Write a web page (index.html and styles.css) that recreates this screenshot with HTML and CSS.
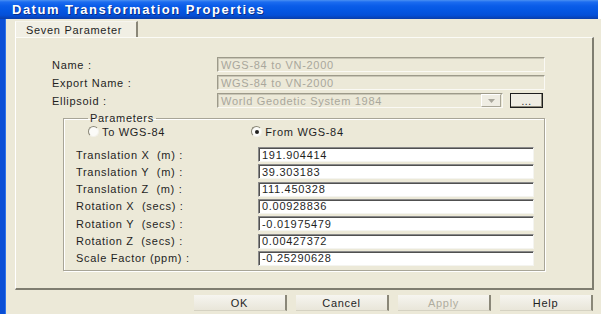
FILE: index.html
```html
<!DOCTYPE html>
<html>
<head>
<meta charset="utf-8">
<link rel="stylesheet" href="styles.css">
</head>
<body>
<div class="window">
  <div class="titlebar"><span class="title">Datum Transformation Properties</span></div>
  <div class="frame">
    <div class="tabs"><div class="tab">Seven Parameter</div></div>
    <div class="panel">
      <div class="props">
        <div class="prow"><span class="plabel">Name :</span><div class="field dis">WGS-84 to VN-2000</div></div>
        <div class="prow"><span class="plabel">Export Name :</span><div class="field dis">WGS-84 to VN-2000</div></div>
        <div class="prow"><span class="plabel">Ellipsoid :</span>
          <div class="combo dis"><span class="combo-text">World Geodetic System 1984</span>
            <span class="arrow"><svg width="7" height="4" viewBox="0 0 7 4"><path d="M0 0h7L3.5 4z" fill="#a9a79c"/></svg></span>
          </div>
          <div class="dots">...</div>
        </div>
      </div>
      <fieldset class="group">
        <legend class="legend">Parameters</legend>
        <div class="radios">
          <div class="ropt"><span class="radio"></span><span>To WGS-84</span></div>
          <div class="ropt from"><span class="radio on"></span><span>From WGS-84</span></div>
        </div>
        <div class="rows">
          <span class="rlabel">Translation X&nbsp; (m) :</span><div class="input">191.904414</div>
          <span class="rlabel">Translation Y&nbsp; (m) :</span><div class="input">39.303183</div>
          <span class="rlabel">Translation Z&nbsp; (m) :</span><div class="input">111.450328</div>
          <span class="rlabel">Rotation X&nbsp; (secs) :</span><div class="input">0.00928836</div>
          <span class="rlabel">Rotation Y&nbsp; (secs) :</span><div class="input">-0.01975479</div>
          <span class="rlabel">Rotation Z&nbsp; (secs) :</span><div class="input">0.00427372</div>
          <span class="rlabel">Scale Factor (ppm) :</span><div class="input">-0.25290628</div>
        </div>
      </fieldset>
    </div>
    <div class="buttons">
      <div class="btn">OK</div>
      <div class="btn">Cancel</div>
      <div class="btn disabled">Apply</div>
      <div class="btn">Help</div>
    </div>
  </div>
</div>
</body>
</html>
```
FILE: styles.css
```css
html, body {
  margin: 0;
  padding: 0;
  background: #fff;
}
body {
  font-family: "Liberation Sans", Arial, sans-serif;
  font-size: 11px;
  letter-spacing: 0.7px;
  color: #1f1f1f;
}
.window {
  width: 601px;
  height: 314px;
  display: flex;
  flex-direction: column;
}
.titlebar {
  height: 22px;
  margin-right: 3px;
  background: linear-gradient(to bottom, #4a90f2 0, #1c6cf0 2px, #0a5ce8 6px, #0558e4 50%, #0450d8 80%, #0a3eaa 100%);
  display: flex;
  align-items: center;
  padding-left: 12px;
}
.title {
  color: #fff;
  font-weight: bold;
  font-size: 13px;
  letter-spacing: 1.5px;
  text-shadow: 1px 1px 0 #0a2f8a;
}
.frame {
  flex: 1;
  background: #ece9d8;
  border-left: 5px solid #0a4fd6;
  box-shadow: inset 1px 0 0 #2f74ea;
  padding: 2px 7px 3px 10px;
  display: flex;
  flex-direction: column;
}
.tabs {
  display: flex;
  height: 16px;
}
.tab {
  width: 110px;
  padding-left: 10px;
  border-top: 1px solid #f6f5ef;
  border-left: 1px solid #fff;
  border-right: 2px solid #8a8778;
  background: #f1efe4;
  display: flex;
  align-items: center;
}
.panel {
  height: 250px;
  border-top: 1px solid #fbfbf6;
  border-left: 1px solid #fff;
  border-right: 2px solid #7f7d70;
  border-bottom: 2px solid #7f7d70;
  display: flex;
  flex-direction: column;
}
.props {
  display: flex;
  flex-direction: column;
  gap: 3px;
  padding: 19px 0 0 36px;
}
.prow {
  display: flex;
  align-items: center;
  height: 15px;
}
.plabel {
  width: 165px;
}
.field {
  width: 323px;
  height: 13px;
  padding-left: 3px;
  display: flex;
  align-items: center;
}
.dis {
  color: #a9a79c;
  border: 1px solid;
  border-color: #9d9a8a #faf9f4 #faf9f4 #9d9a8a;
  box-shadow: inset 1px 1px 0 #c9c6b6;
  background: #ece9d8;
}
.combo {
  width: 284px;
  height: 13px;
  display: flex;
  align-items: center;
  justify-content: space-between;
}
.combo-text {
  padding-left: 3px;
}
.arrow {
  width: 18px;
  height: 11px;
  margin-right: 1px;
  background: #efede3;
  border: 1px solid;
  border-color: #fff #a9a697 #a9a697 #fff;
  display: flex;
  align-items: center;
  justify-content: center;
}
.dots {
  margin-left: 7px;
  width: 31px;
  height: 13px;
  border: 1px solid #1e1e1e;
  box-shadow: inset -1px -1px 0 #8d8a7c;
  background: #efede3;
  display: flex;
  justify-content: center;
  align-items: flex-end;
  line-height: 11px;
  font-size: 10px;
  letter-spacing: 0.5px;
}
.group {
  margin: 4px 0 0 47px;
  width: 457px;
  padding: 0 10px 4px 12px;
  border: 1px solid #a8a597;
  box-shadow: 1px 1px 0 #fff, inset 1px 1px 0 #fff;
}
.legend {
  padding: 0 2px;
  margin-left: 12px;
  line-height: 13px;
}
.radios {
  display: flex;
  align-items: center;
  height: 13px;
  margin-bottom: 9px;
}
.ropt {
  display: flex;
  align-items: center;
  gap: 3px;
  margin-left: 12px;
}
.ropt.from {
  margin-left: 86px;
}
.radio {
  width: 9px;
  height: 9px;
  border-radius: 50%;
  background: #fbfbf8;
  border: 1px solid;
  border-color: #8a8778 #f3f2ea #f3f2ea #8a8778;
  display: flex;
  align-items: center;
  justify-content: center;
}
.radio.on::after {
  content: "";
  width: 4px;
  height: 4px;
  border-radius: 50%;
  background: #202020;
}
.rows {
  display: grid;
  grid-template-columns: 182px 276px;
  grid-auto-rows: 15px;
  row-gap: 2.33px;
  align-items: center;
}
.input {
  height: 13px;
  background: #fff;
  border: 1px solid;
  border-color: #8a8a8a #f4f4f0 #f4f4f0 #8a8a8a;
  box-shadow: inset 1px 1px 0 #505050;
  padding-left: 3px;
  display: flex;
  align-items: center;
}
.buttons {
  display: flex;
  justify-content: flex-end;
  gap: 9px;
  margin-top: 5px;
  margin-right: 1px;
}
.btn {
  width: 91px;
  height: 15px;
  border-right: 2px solid #8a8778;
  border-bottom: 1px solid #d5d2c2;
  background: linear-gradient(to bottom, #f6f5f0, #e9e6d9);
  display: flex;
  align-items: center;
  justify-content: center;
}
.btn.disabled {
  color: #b0ad9f;
}
```
